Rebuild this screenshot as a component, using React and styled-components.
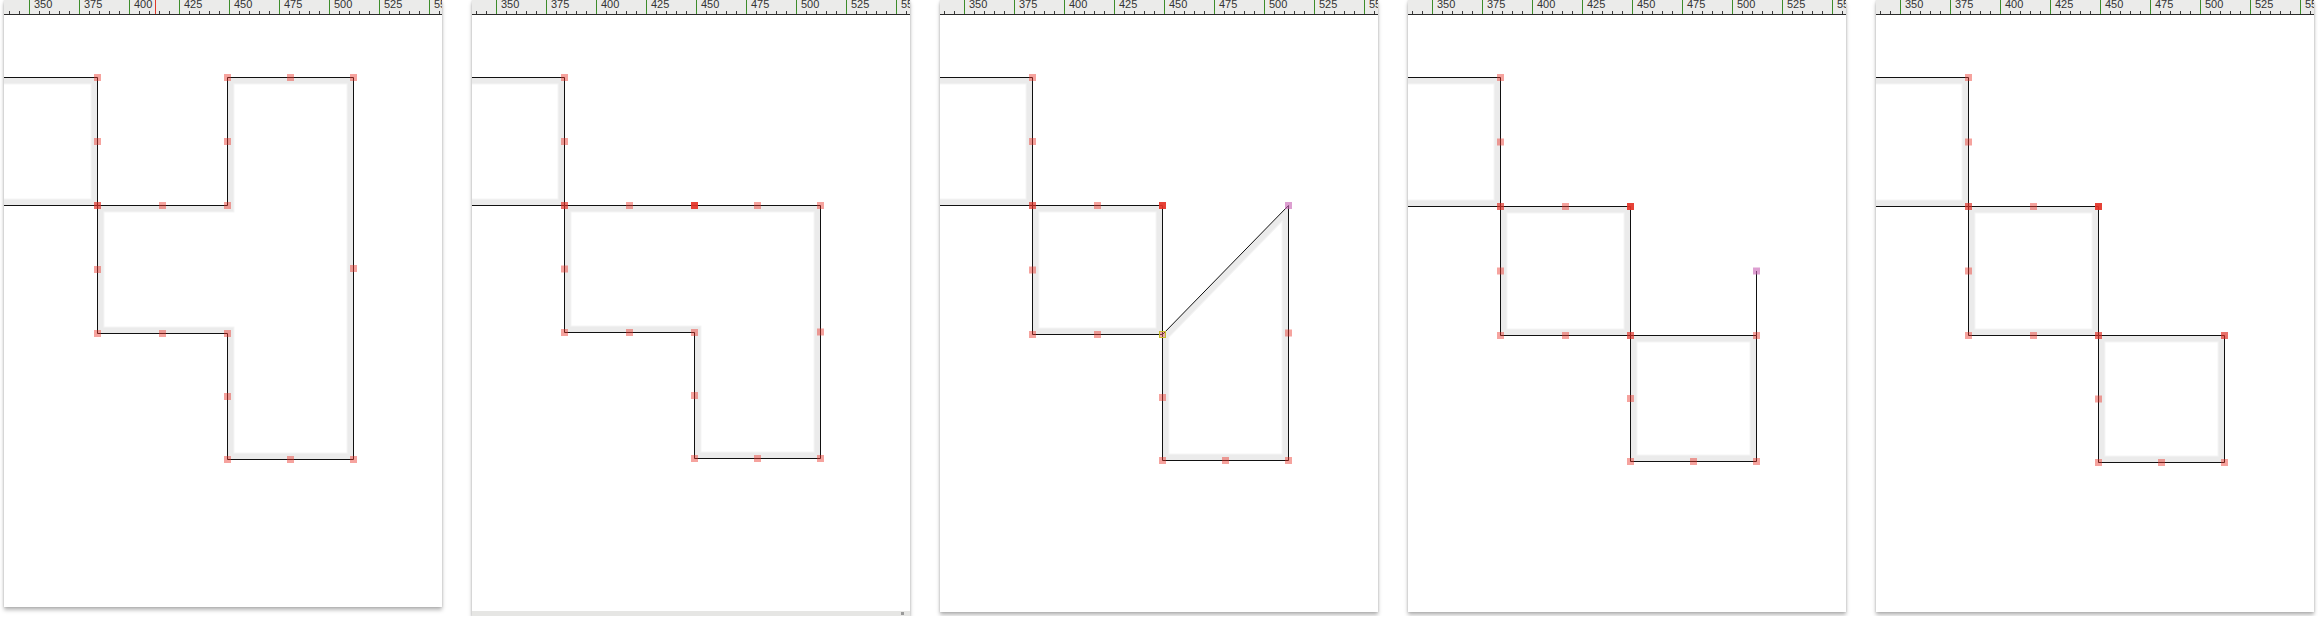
import React, { useId } from 'react'
import styled, { createGlobalStyle } from 'styled-components'

const GlobalStyle = createGlobalStyle`
  html, body { margin: 0; padding: 0; background: #fff; }
  body { font-family: "Liberation Sans", Arial, sans-serif; overflow: hidden; }
`

const Strip = styled.main`
  display: flex;
  align-items: flex-start;
  gap: 30px;
  padding-left: 4px;
`

const Panel = styled.section`
  position: relative;
  width: 438px;
  height: ${p => p.$h}px;
  display: flex;
  flex-direction: column;
  background: #fff;
  box-shadow: 0 3px 4px rgba(0, 0, 0, 0.28), 0 0 2px rgba(0, 0, 0, 0.16);
  overflow: hidden;
`

const Ruler = styled.div`
  position: relative;
  flex: 0 0 14px;
  display: flex;
  padding-left: ${p => p.$offset}px;
  background-color: #ebebea;
  background-image: repeating-linear-gradient(to right, #3a3a3a 0 1px, transparent 1px 10px);
  background-size: 100% 3px;
  background-repeat: no-repeat;
  background-position: ${p => p.$offset % 10}px bottom;
  border-bottom: 1px solid #2a2a2a;
  overflow: hidden;
`

const Segment = styled.div`
  flex: 0 0 50px;
  box-sizing: border-box;
  border-left: 1px solid #3c8c2a;
  padding-left: 4px;
  font-size: 11px;
  line-height: 10px;
  color: #333;
`

const Label = styled.span`
  display: block;
  margin-top: -1px;
`

const Cursor = styled.div`
  position: absolute;
  top: 0;
  bottom: 0;
  left: ${p => p.$x}px;
  width: 1px;
  background: #e0392b;
`

const Canvas = styled.div`
  flex: 1;
  min-height: 0;
  svg { display: block; width: 100%; height: 100%; }
`

const Footer = styled.div`
  flex: 0 0 5px;
  display: flex;
  justify-content: flex-end;
  align-items: center;
  padding-right: 6px;
  background: #e6e6e4;
`

const Grip = styled.span`
  width: 3px;
  height: 3px;
  background: #9a9a9a;
`

const LABELS = [350, 375, 400, 425, 450, 475, 500, 525, 550]

function Region({ points }) {
  const id = 'c' + useId().replace(/[^a-zA-Z0-9]/g, '')
  const pts = points.map(p => p.join(',')).join(' ')
  return (
    <g>
      <clipPath id={id}>
        <polygon points={pts} />
      </clipPath>
      <polygon points={pts} fill="none" stroke="#f5f5f5" strokeWidth="14" clipPath={`url(#${id})`} />
      <polygon points={pts} fill="none" stroke="#ebebeb" strokeWidth="12" clipPath={`url(#${id})`} />
    </g>
  )
}

const markerFill = {
  n: 'rgba(235, 50, 40, 0.45)',
  d: 'rgba(222, 45, 35, 0.68)',
  r: 'rgba(228, 50, 38, 0.92)',
  p: 'rgba(200, 100, 180, 0.62)',
}

function Marker({ x, y, kind }) {
  if (kind === 'y') {
    return (
      <g>
        <rect x={x - 3.5} y={y - 3.5} width="7" height="7" fill="rgba(235, 90, 90, 0.45)" />
        <rect x={x - 3} y={y - 3} width="6" height="6" fill="none" stroke="#c6bd2c" strokeWidth="1" />
      </g>
    )
  }
  return <rect x={x - 3.5} y={y - 3.5} width="7" height="7" fill={markerFill[kind]} />
}

const m = (a, b) => (a + b) / 2

function build(step, A, B, C, Y) {
  const [Y0, Y1, Y2, Y3] = Y
  const left = [[-20, Y0], [A, Y0], [A, Y1], [-20, Y1]]
  const sq1 = [[A, Y1], [B, Y1], [B, Y2], [A, Y2]]
  const sq2 = [[B, Y2], [C, Y2], [C, Y3], [B, Y3]]
  const common = [
    [A, Y0, 'n'], [A, m(Y0, Y1), 'n'], [A, Y1, 'd'], [m(A, B), Y1, 'n'],
    [A, m(Y1, Y2), 'n'], [A, Y2, 'n'], [m(A, B), Y2, 'n'],
    [B, m(Y2, Y3), 'n'], [B, Y3, 'n'], [m(B, C), Y3, 'n'], [C, Y3, 'n'],
  ]
  if (step === 1) {
    return {
      regions: [left, [[A, Y1], [B, Y1], [B, Y0], [C, Y0], [C, Y3], [B, Y3], [B, Y2], [A, Y2]]],
      lines: [],
      markers: [
        ...common,
        [B, Y1, 'n'], [B, m(Y0, Y1), 'n'], [B, Y0, 'n'], [m(B, C), Y0, 'n'], [C, Y0, 'n'],
        [C, m(Y0, Y3), 'n'], [B, Y2, 'n'],
      ],
    }
  }
  if (step === 2) {
    return {
      regions: [left, [[A, Y1], [C, Y1], [C, Y3], [B, Y3], [B, Y2], [A, Y2]]],
      lines: [],
      markers: [
        ...common,
        [m(B, C), Y1, 'n'], [C, Y1, 'n'], [C, m(Y1, Y3), 'n'], [B, Y2, 'n'], [B, Y1, 'r'],
      ],
    }
  }
  if (step === 3) {
    return {
      regions: [left, sq1, [[B, Y2], [C, Y1], [C, Y3], [B, Y3]]],
      lines: [],
      markers: [
        ...common,
        [C, m(Y1, Y3), 'n'], [B, Y1, 'r'], [C, Y1, 'p'], [B, Y2, 'y'],
      ],
    }
  }
  if (step === 4) {
    return {
      regions: [left, sq1, sq2],
      lines: [[[C, m(Y1, Y2)], [C, Y2]]],
      markers: [
        ...common,
        [C, Y2, 'n'], [B, Y2, 'd'], [B, Y1, 'r'], [C, m(Y1, Y2), 'p'],
      ],
    }
  }
  return {
    regions: [left, sq1, sq2],
    lines: [],
    markers: [...common, [B, Y2, 'd'], [C, Y2, 'd'], [B, Y1, 'r']],
  }
}

// canvas y = page y - 15 (ruler is 14px + 1px rule)
const PANELS = [
  { step: 1, h: 607, x: [93.5, 223.5, 349.5], y: [62.5, 190.5, 318.5, 444.5], offset: 25, cursor: 151 },
  { step: 2, h: 616, x: [92.5, 222.5, 348.5], y: [62.5, 190.5, 317.5, 443.5], offset: 24, footer: true },
  { step: 3, h: 612, x: [92.5, 222.5, 348.5], y: [62.5, 190.5, 319.5, 445.5], offset: 24 },
  { step: 4, h: 612, x: [92.5, 222.5, 348.5], y: [62.5, 191.5, 320.5, 446.5], offset: 24 },
  { step: 5, h: 612, x: [92.5, 222.5, 348.5], y: [62.5, 191.5, 320.5, 447.5], offset: 24 },
]

function Drawing({ step, x, y }) {
  const [A, B, C] = x
  const { regions, lines, markers } = build(step, A, B, C, y)
  return (
    <svg>
      {regions.map((r, i) => <Region key={i} points={r} />)}
      {regions.map((r, i) => (
        <polygon key={i} points={r.map(p => p.join(',')).join(' ')} fill="none" stroke="#111" strokeWidth="1" />
      ))}
      {lines.map(([a, b], i) => (
        <line key={i} x1={a[0]} y1={a[1]} x2={b[0]} y2={b[1]} stroke="#111" strokeWidth="1" />
      ))}
      {markers.map(([mx, my, k], i) => <Marker key={i} x={mx} y={my} kind={k} />)}
    </svg>
  )
}

export default function App() {
  return (
    <>
      <GlobalStyle />
      <Strip>
        {PANELS.map(p => (
          <Panel key={p.step} $h={p.h}>
            <Ruler $offset={p.offset}>
              {LABELS.map(l => (
                <Segment key={l}>
                  <Label>{l}</Label>
                </Segment>
              ))}
              {p.cursor && <Cursor $x={p.cursor} />}
            </Ruler>
            <Canvas>
              <Drawing step={p.step} x={p.x} y={p.y} />
            </Canvas>
            {p.footer && (
              <Footer>
                <Grip />
              </Footer>
            )}
          </Panel>
        ))}
      </Strip>
    </>
  )
}
